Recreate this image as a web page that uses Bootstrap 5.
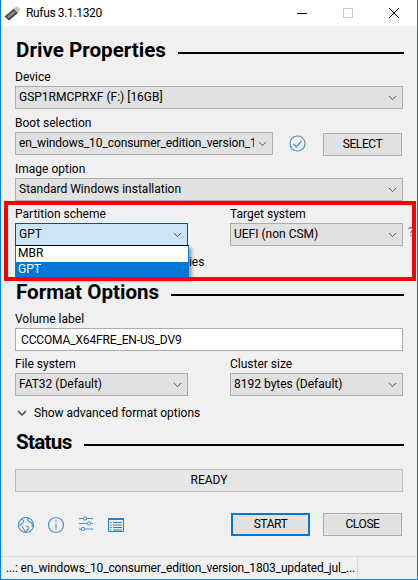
<!DOCTYPE html>
<html lang="en">
<head>
<meta charset="UTF-8">
<meta name="viewport" content="width=device-width, initial-scale=1.0">
<title>Rufus 3.1.1320</title>
<link href="https://cdn.jsdelivr.net/npm/bootstrap@5.3.0/dist/css/bootstrap.min.css" rel="stylesheet">
<style>
    html, body { height: 100%; }
    body { background: #f0f0f0; font-family: Roboto, "Noto Sans", sans-serif; font-size: 12px; color: #000; overflow: hidden; }
    .app-window { position: relative; width: 418px; height: 580px; border: 1px solid #0a7fd8; border-top: 0; overflow: hidden; }
    .title-bar { height: 26px; background: #fff; padding-left: 3px; }
    .title-text { margin-left: 4px; letter-spacing: -.35px; }
    .win-btn { width: 46px; height: 26px; }
    .app-body { padding: 12px 14px 0; height: 530px; }
    .sec-head { height: 26px; font-size: 20.6px; font-weight: 700; padding-left: 1px; }
    .sec-title { line-height: 24px; margin-bottom: 2px; }
    .sec-title.is-narrow { letter-spacing: -.7px; }
    .sec-head .rule { flex: 1; height: 2px; background: #000; margin: 3px -1px 0 12px; }
    .fld-label { display: block; height: 17px; line-height: 16px; margin: 0; }
    .win-select.form-select, .win-input.form-control { height: 23px; min-height: 0; padding: 0 18px 0 3px; border: 1px solid #adadad; border-radius: 0; font-size: 12px; line-height: 21px; color: #000; box-shadow: none; }
    .win-select.form-select { background-color: #e1e1e1; background-position: right 5px center; background-size: 9px 6px;
        background-image: url("data:image/svg+xml,%3csvg xmlns='http://www.w3.org/2000/svg' viewBox='0 0 11 7'%3e%3cpath fill='none' stroke='%23555' stroke-width='1.2' d='M1 1l4.5 4.5L10 1'/%3e%3c/svg%3e"); }
    .win-select.is-open.form-select { background-color: #cce4f7; border-color: #005499; }
    .win-input.form-control { background: #fff; padding-left: 5px; letter-spacing: -.15px; }
    .tight-name { letter-spacing: -.1px; }
    .gap-5px { margin-top: 5px; }
    .half-w { width: 173px; }
    .win-btn-flat.btn { width: 79px; height: 23px; padding: 0; font-size: 12px; letter-spacing: -.4px; line-height: 21px; color: #000; background: #e1e1e1; border: 1px solid #adadad; border-radius: 0; flex: none; }
    .win-btn-flat.is-default.btn { border: 2px solid #0078d7; line-height: 19px; }
    .boot-check { width: 17px; height: 17px; margin: 3px 17px 0 16px; flex: none; }
    .boot-btn { margin-top: 1px; }
    .help-mark { position: absolute; left: 407px; top: 225px; color: #2a7fc0; line-height: 14px; }
    .adv-toggle { height: 16px; line-height: 16px; padding-left: 2px; }
    .adv-toggle svg { width: 10px; height: 7px; margin-right: 7px; flex: none; }
    .status-bar-ready { height: 23px; border: 1px solid #bcbcbc; background: #e6e6e6; line-height: 21px; text-align: center; margin-top: 13px; }
    .tool-row { margin-top: 21px; height: 23px; }
    .tool-ic { width: 18px; height: 18px; margin-right: 12px; flex: none; }
    .tool-ic.is-first { margin-left: 2px; }
    .status-strip { position: absolute; left: 0; right: 0; bottom: 0; height: 23px; border-top: 1px solid #d9d9d9; padding-left: 5px; line-height: 22px; background: #f0f0f0; }
    .status-cell { width: 352px; height: 22px; border-right: 1px solid #d9d9d9; white-space: nowrap; overflow: hidden; letter-spacing: -.16px; }
    .red-frame { position: absolute; left: 3px; top: 201px; width: 412px; height: 80px; border: 4px solid #f00; pointer-events: none; }
    .drop-list { position: absolute; left: 14px; top: 245px; width: 174px; height: 33px; background: #fff; border: 1px solid #0078d7; border-top: 1px solid #000; box-shadow: 3px 3px 3px rgba(0,0,0,.3); line-height: 15px; }
    .drop-item { height: 15.5px; padding-left: 2px; }
    .drop-item.is-sel { background: #0078d7; color: #fff; }
</style>
</head>
<body>
<div class="app-window">
    <div class="title-bar d-flex align-items-center">
        <svg width="18" height="17" viewBox="0 0 18 17">
            <path d="M0.500 11.500 L10 3.500 L14 8 L5 15.500 Z" fill="#4a4a4a"/>
            <path d="M3 11.500 L10.500 5.500 L12 7 L4.500 13.200 Z" fill="#8c8c8c"/>
            <path d="M10 3.500 L13 1 L16.500 4.500 L14 8 Z" fill="#c4c4c4"/>
        </svg>
        <span class="title-text">Rufus 3.1.1320</span>
        <div class="ms-auto d-flex">
            <div class="win-btn d-flex align-items-center justify-content-center"><svg width="10" height="10"><path d="M0 5.500h10" stroke="#000"/></svg></div>
            <div class="win-btn d-flex align-items-center justify-content-center"><svg width="10" height="10"><rect x=".5" y=".5" width="9" height="9" fill="none" stroke="#ccc"/></svg></div>
            <div class="win-btn d-flex align-items-center justify-content-center"><svg width="10" height="10"><path d="M0 0l10 10M10 0L0 10" stroke="#000"/></svg></div>
        </div>
    </div>

    <div class="app-body">
        <div class="sec-head d-flex align-items-center"><span class="sec-title">Drive Properties</span><span class="rule"></span></div>
        <label class="fld-label gap-5px">Device</label>
        <select class="form-select win-select"><option>GSP1RMCPRXF (F:) [16GB]</option></select>
        <label class="fld-label" style="margin-top:6px">Boot selection</label>
        <div class="d-flex align-items-start">
            <select class="form-select win-select tight-name" style="width:258px;flex:none"><option>en_windows_10_consumer_edition_version_1</option></select>
            <svg class="boot-check" viewBox="0 0 17 17"><circle cx="8.500" cy="8.500" r="7.500" fill="none" stroke="#4a94c8" stroke-width="1.2"/><path d="M4.500 9l3 3 5-6" fill="none" stroke="#4a94c8" stroke-width="1.2"/></svg>
            <button type="button" class="btn win-btn-flat boot-btn">SELECT</button>
        </div>
        <label class="fld-label gap-5px">Image option</label>
        <select class="form-select win-select"><option>Standard Windows installation</option></select>

        <div class="d-flex justify-content-between gap-5px">
            <div class="half-w">
                <label class="fld-label">Partition scheme</label>
                <select class="form-select win-select is-open"><option>GPT</option></select>
            </div>
            <div class="half-w">
                <label class="fld-label">Target system</label>
                <select class="form-select win-select"><option>UEFI (non CSM)</option></select>
            </div>
        </div>
        <div class="adv-toggle d-flex align-items-center" style="margin-top:8px">
            <svg viewBox="0 0 10 7"><path d="M1 1l4 4 4-4" fill="none" stroke="#444" stroke-width="1.5"/></svg>
            <span>Show advanced drive properties</span>
        </div>

        <div class="sec-head d-flex align-items-center" style="margin-top:10px"><span class="sec-title">Format Options</span><span class="rule"></span></div>
        <label class="fld-label gap-5px">Volume label</label>
        <input type="text" class="form-control win-input" value="CCCOMA_X64FRE_EN-US_DV9">
        <div class="d-flex justify-content-between gap-5px">
            <div class="half-w">
                <label class="fld-label">File system</label>
                <select class="form-select win-select"><option>FAT32 (Default)</option></select>
            </div>
            <div class="half-w">
                <label class="fld-label">Cluster size</label>
                <select class="form-select win-select"><option>8192 bytes (Default)</option></select>
            </div>
        </div>
        <div class="adv-toggle d-flex align-items-center" style="margin-top:9px">
            <svg viewBox="0 0 10 7"><path d="M1 1l4 4 4-4" fill="none" stroke="#444" stroke-width="1.5"/></svg>
            <span>Show advanced format options</span>
        </div>

        <div class="sec-head d-flex align-items-center" style="margin-top:9px"><span class="sec-title is-narrow">Status</span><span class="rule"></span></div>
        <div class="status-bar-ready">READY</div>
        <div class="tool-row d-flex align-items-center">
            <svg class="tool-ic is-first" viewBox="0 0 18 18"><circle cx="9" cy="9" r="7.500" fill="none" stroke="#4a94c8" stroke-width="1.2"/><path d="M5 3c3 2 1 4 0 5s-3 1-3 2M11 2c-1 2 0 3 2 4s3 3 2 5M9 10c2 0 3 2 2 3s-2 3-2 4M5 10c1 2 2 3 3 6" fill="none" stroke="#4a94c8" stroke-width="1.1"/></svg>
            <svg class="tool-ic" viewBox="0 0 18 18"><circle cx="9" cy="9" r="7.500" fill="none" stroke="#4a94c8" stroke-width="1.2"/><path d="M9 7.500v6" stroke="#8fbadb" stroke-width="2"/><circle cx="9" cy="5" r="1.1" fill="#8fbadb"/></svg>
            <svg class="tool-ic" viewBox="0 0 18 18"><path d="M2 2.500h14M2 7.500h14M2 13h14" stroke="#4a94c8"/><circle cx="8" cy="2.500" r="1.700" fill="#f0f0f0" stroke="#4a94c8"/><circle cx="12" cy="7.500" r="1.700" fill="#f0f0f0" stroke="#4a94c8"/><circle cx="6" cy="13" r="1.700" fill="#f0f0f0" stroke="#4a94c8"/></svg>
            <svg class="tool-ic" viewBox="0 0 18 18"><rect x="1.500" y="2.500" width="15" height="13" fill="none" stroke="#2f7fbd"/><path d="M1.500 3.500h15" stroke="#2f7fbd"/><path d="M3 6.500h1.500M3 9h1.500M3 11.500h1.500M3 14h1.500M6 6.500h9M6 9h9M6 11.500h9M6 14h9" stroke="#2f7fbd"/></svg>
            <div class="ms-auto d-flex" style="gap:13px;margin-right:1px">
                <button type="button" class="btn win-btn-flat is-default">START</button>
                <button type="button" class="btn win-btn-flat">CLOSE</button>
            </div>
        </div>
    </div>

    <div class="help-mark">?</div>
    <div class="drop-list">
        <div class="drop-item">MBR</div>
        <div class="drop-item is-sel">GPT</div>
    </div>
    <div class="red-frame"></div>

    <div class="status-strip d-flex">
        <div class="status-cell">...: en_windows_10_consumer_edition_version_1803_updated_jul_...</div>
    </div>
</div>
<script src="https://cdn.jsdelivr.net/npm/bootstrap@5.3.0/dist/js/bootstrap.bundle.min.js"></script>
</body>
</html>
